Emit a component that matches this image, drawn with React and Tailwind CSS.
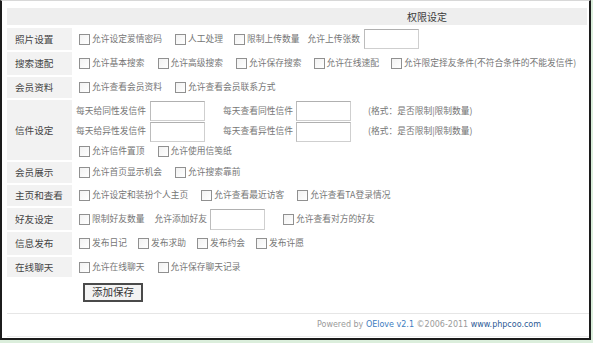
import React from "react";

const cjk = { fontFamily: '"Noto Sans CJK SC", "Noto Sans", sans-serif' };

function Cb() {
  return (
    <span className="inline-block w-[11px] h-[11px] shrink-0 border border-[#909090] bg-gradient-to-br from-[#f2f2f2] to-white mr-[2px]" />
  );
}

function Item({ children, ml = 0 }) {
  return (
    <span className="flex items-center" style={{ marginLeft: ml }}>
      <Cb />
      <span className="text-[8.75px] leading-none text-[#767676] whitespace-nowrap">{children}</span>
    </span>
  );
}

function Txt({ children, ml = 0 }) {
  return (
    <span className="text-[8.75px] leading-none text-[#767676] whitespace-nowrap" style={{ marginLeft: ml }}>
      {children}
    </span>
  );
}

function Inp({ ml = 0, h = 20 }) {
  return (
    <span
      className="inline-block w-[55px] shrink-0 bg-white border border-[#cfcfcf] border-t-[#b0b0b0] border-l-[#bcbcbc]"
      style={{ marginLeft: ml, height: h }}
    />
  );
}

function Row({ label, h, children, top = false }) {
  return (
    <div className="flex" style={{ height: h }}>
      <div className="w-[65px] shrink-0 bg-[#f2f2f2] flex items-center pl-[8px] text-[9.6px] text-[#444] whitespace-nowrap">
        {label}
      </div>
      <div className={"flex-1 pl-[7px] flex " + (top ? "flex-col" : "items-center")}>{children}</div>
    </div>
  );
}

export default function App() {
  return (
    <div className="w-[593px] h-[343px] bg-[#dbeedc] overflow-hidden" style={cjk}>
      <div className="w-[591px] h-[340px] bg-white border-l-2 border-r-2 border-b-2 border-t border-[#1c1c1c] border-t-[#d8d8d8] pt-[7px] pl-[5px] pr-[1px] flex flex-col">
        <div className="w-[580px] h-[17px] bg-[#eeeeee] flex items-center pl-[400px] text-[10px] text-[#3a3a3a]">
          权限设定
        </div>
        <div className="w-[580px] mt-[3px] flex flex-col gap-[2px]">
          <Row label="照片设置" h={22}>
            <Item>允许设定爱情密码</Item>
            <Item ml={13}>人工处理</Item>
            <Item ml={11}>限制上传数量</Item>
            <Txt ml={8}>允许上传张数</Txt>
            <Inp ml={4} />
          </Row>
          <Row label="搜索速配" h={23}>
            <Item>允许基本搜索</Item>
            <Item ml={13}>允许高级搜索</Item>
            <Item ml={13}>允许保存搜索</Item>
            <Item ml={12}>允许在线速配</Item>
            <Item ml={12}>允许限定择友条件(不符合条件的不能发信件)</Item>
          </Row>
          <Row label="会员资料" h={21}>
            <Item>允许查看会员资料</Item>
            <Item ml={13}>允许查看会员联系方式</Item>
          </Row>
          <Row label="信件设定" h={60} top>
            <div className="flex items-center -ml-[3px] mt-[1px] h-[20px]">
              <Txt>每天给同性发信件</Txt>
              <Inp ml={4} />
              <Txt ml={18}>每天查看同性信件</Txt>
              <Inp ml={3} />
              <Txt ml={17}>(格式：是否限制|限制数量)</Txt>
            </div>
            <div className="flex items-center -ml-[3px] h-[21px]">
              <Txt>每天给异性发信件</Txt>
              <Inp ml={4} />
              <Txt ml={18}>每天查看异性信件</Txt>
              <Inp ml={3} />
              <Txt ml={17}>(格式：是否限制|限制数量)</Txt>
            </div>
            <div className="flex items-center h-[18px]">
              <Item>允许信件置顶</Item>
              <Item ml={13}>允许使用信笺纸</Item>
            </div>
          </Row>
          <Row label="会员展示" h={21}>
            <Item>允许首页显示机会</Item>
            <Item ml={13}>允许搜索靠前</Item>
          </Row>
          <Row label="主页和查看" h={21}>
            <Item>允许设定和装扮个人主页</Item>
            <Item ml={13}>允许查看最近访客</Item>
            <Item ml={13}>允许查看TA登录情况</Item>
          </Row>
          <Row label="好友设定" h={22}>
            <Item>限制好友数量</Item>
            <Txt ml={10}>允许添加好友</Txt>
            <Inp ml={3} h={21} />
            <Item ml={18}>允许查看对方的好友</Item>
          </Row>
          <Row label="信息发布" h={23}>
            <Item>发布日记</Item>
            <Item ml={11}>发布求助</Item>
            <Item ml={11}>发布约会</Item>
            <Item ml={11}>发布许愿</Item>
          </Row>
          <Row label="在线聊天" h={20}>
            <Item>允许在线聊天</Item>
            <Item ml={13}>允许保存聊天记录</Item>
          </Row>
        </div>
        <div className="pl-[76px] mt-[6px]">
          <button className="w-[60px] h-[19px] border-2 border-[#4a4a4a] bg-[#f3f3f3] text-[10.5px] leading-none text-[#333] flex items-center justify-center">
            添加保存
          </button>
        </div>
        <div className="w-[582px] mt-[11px] border-t border-[#e6e6e6] h-[24px] border-b border-b-[#ececec] flex items-center justify-center pl-[262px] text-[8px] whitespace-nowrap" style={{ fontFamily: '"DejaVu Sans", Verdana, sans-serif' }}>
          <span className="text-[#9a9a9a]">Powered by&nbsp;</span>
          <span className="text-[#3d7cc0]">OElove v2.1</span>
          <span className="text-[#9a9a9a]">&nbsp;©2006-2011&nbsp;</span>
          <span className="text-[#2c5a96]">www.phpcoo.com</span>
        </div>
      </div>
    </div>
  );
}
